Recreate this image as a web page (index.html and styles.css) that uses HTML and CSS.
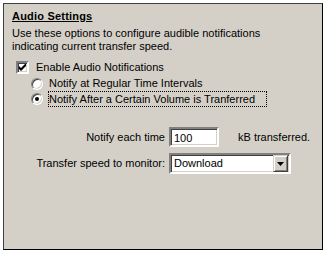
FILE: index.html
```html
<!DOCTYPE html>
<html lang="en">
<head>
    <meta charset="UTF-8">
    <title>Audio Settings</title>
    <link rel="stylesheet" href="styles.css">
</head>
<body>
    <div class="panel">
        <div class="heading">Audio Settings</div>
        <div class="desc">Use these options to configure audible notifications<br>indicating current transfer speed.</div>
        <div class="check-row">
            <span class="checkbox">
                <svg width="7" height="7" viewBox="0 0 7 7"><path d="M0 2 L0 5 L2 7 L7 2 L7 -1 L2 4 Z" fill="#000"/></svg>
            </span>
            <span class="label">Enable Audio Notifications</span>
        </div>
        <div class="radio-row">
            <span class="radio"></span>
            <span class="label">Notify at Regular Time Intervals</span>
        </div>
        <div class="radio-row">
            <span class="radio checked"></span>
            <span class="label focused">Notify After a Certain Volume is Tranferred</span>
        </div>
        <div class="form">
            <span class="form-label">Notify each time</span>
            <div class="field">
                <span class="textbox">100</span>
                <span class="unit">kB transferred.</span>
            </div>
            <span class="form-label">Transfer speed to monitor:</span>
            <div class="field">
                <span class="combo">
                    <span class="combo-text">Download</span>
                    <span class="combo-btn">
                        <svg width="7" height="4" viewBox="0 0 7 4"><path d="M0 0 H7 L3.5 4 Z" fill="#000"/></svg>
                    </span>
                </span>
            </div>
        </div>
    </div>
</body>
</html>
```

FILE: styles.css
```css
html, body {
    margin: 0;
    padding: 0;
    background: #fff;
}
body {
    padding: 3px 0 0 3px;
    font-family: "Liberation Sans", Arial, sans-serif;
    font-size: 11px;
    line-height: 13px;
    color: #000;
}
.panel {
    box-sizing: border-box;
    width: 320px;
    height: 247px;
    background: #d4d0c8;
    border: 1px solid #000;
    border-top-color: #404040;
    border-left-color: #404040;
    padding: 6px 0 0 8px;
}
.heading {
    font-weight: bold;
    text-decoration: underline;
    letter-spacing: 0.2px;
}
.desc {
    margin-top: 4px;
}
.check-row, .radio-row {
    display: flex;
    align-items: center;
    height: 15px;
}
.check-row {
    margin-top: 7px;
    padding-left: 4px;
    margin-bottom: 1px;
}
.radio-row {
    padding-left: 19px;
}
.checkbox {
    box-sizing: border-box;
    width: 13px;
    height: 13px;
    background: #fff;
    border: 2px solid;
    border-color: #808080 #fff #fff #808080;
    box-shadow: inset 1px 1px 0 #404040, inset -1px -1px 0 #d4d0c8;
    display: flex;
    align-items: center;
    justify-content: center;
    margin-right: 6px;
}
.radio {
    box-sizing: border-box;
    width: 12px;
    height: 12px;
    border-radius: 50%;
    background: #fff;
    border: 1px solid;
    border-color: #808080 #fff #fff #808080;
    box-shadow: inset 1px 1px 0 #404040, inset -1px -1px 0 #d4d0c8;
    margin-right: 5px;
    display: flex;
    align-items: center;
    justify-content: center;
}
.radio.checked::after {
    content: "";
    width: 4px;
    height: 4px;
    border-radius: 50%;
    background: #000;
}
.label {
    padding: 0 1px;
}
.focused {
    box-sizing: border-box;
    width: 219px;
    height: 16px;
    line-height: 14px;
    border: 1px dotted #000;
    padding: 0;
}
.form {
    display: grid;
    grid-template-columns: 153px auto;
    column-gap: 4px;
    row-gap: 6px;
    align-items: center;
    margin-top: 21px;
}
.form-label {
    text-align: right;
}
.field {
    display: flex;
    align-items: center;
}
.textbox, .combo {
    box-sizing: border-box;
    background: #fff;
    border: 2px solid;
    border-color: #808080 #fff #fff #808080;
    box-shadow: inset 1px 1px 0 #404040, inset -1px -1px 0 #d4d0c8;
}
.textbox {
    width: 50px;
    height: 20px;
    padding: 2px 0 0 3px;
    line-height: 14px;
}
.unit {
    margin-left: 19px;
}
.combo {
    width: 122px;
    height: 21px;
    display: flex;
    align-items: center;
    justify-content: space-between;
    padding: 0 1px 0 3px;
}
.combo-btn {
    box-sizing: border-box;
    width: 15px;
    height: 17px;
    background: #d4d0c8;
    border: 1px solid;
    border-color: #d4d0c8 #404040 #404040 #d4d0c8;
    box-shadow: inset 1px 1px 0 #fff, inset -1px -1px 0 #808080;
    display: flex;
    align-items: center;
    justify-content: center;
}
```
